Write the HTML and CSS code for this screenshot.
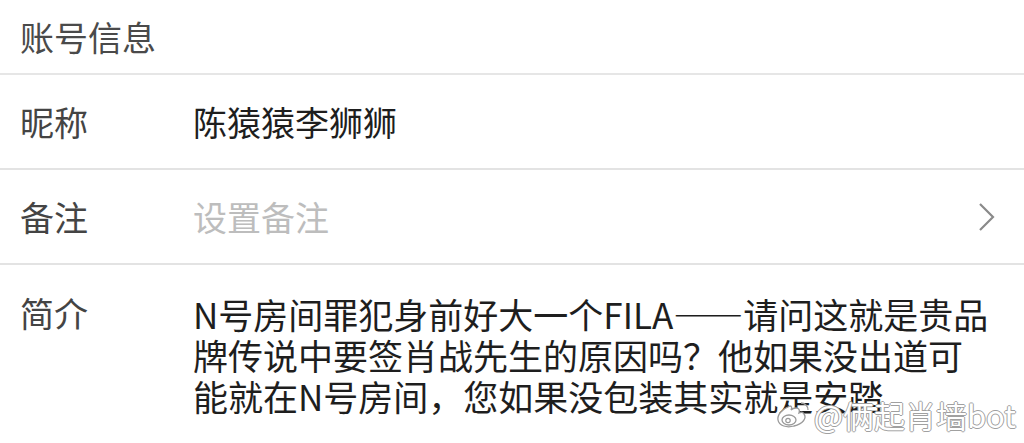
FILE: index.html
```html
<!DOCTYPE html>
<html lang="zh-CN">
<head>
    <meta charset="UTF-8">
    <meta name="viewport" content="width=device-width, initial-scale=1.0">
    <title>账号信息</title>
    <link rel="stylesheet" href="styles.css">
</head>
<body>
    <div class="page">
        <!-- Section title -->
        <div class="section-title">账号信息</div>

        <div class="row">
            <div class="label">昵称</div>
            <div class="value">陈猿猿李狮狮</div>
        </div>

        <div class="row">
            <div class="label">备注</div>
            <div class="value placeholder">设置备注</div>
            <svg class="chevron" width="18" height="30" viewBox="0 0 18 30">
                <polyline points="2,2 15,15 2,28" fill="none" stroke="#8a8a8a" stroke-width="2.2"/>
            </svg>
        </div>

        <div class="row bio">
            <div class="label">简介</div>
            <div class="value">N号房间罪犯身前好大一个FILA——请问这就是贵品<br>牌传说中要签肖战先生的原因吗？他如果没出道可<br>能就在N号房间，您如果没包装其实就是安踏</div>
        </div>

        <!-- Watermark -->
        <div class="watermark">
            <svg class="weibo" width="34" height="28" viewBox="0 0 34 28">
                <path d="M14 5 C6 8 1 14 2 19 C3 25 11 27 18 25 C27 23 31 17 28 13 C27 11 25 11 23 12 C24 9 23 7 20 7 C18 7 16 8 15 9 C16 7 16 5 14 5 Z" fill="#fff" stroke="#9a9a9a" stroke-width="1.3"/>
                <ellipse cx="13" cy="19" rx="7" ry="5" fill="none" stroke="#9a9a9a" stroke-width="1.3"/>
                <circle cx="12" cy="19.5" r="2.2" fill="none" stroke="#9a9a9a" stroke-width="1.2"/>
                <path d="M25 2 C29 2 32 5 32 9" fill="none" stroke="#9a9a9a" stroke-width="1.3"/>
            </svg>
            <span>@俩起肖墙bot</span>
        </div>
    </div>
</body>
</html>
```

FILE: styles.css
```css
* {
    margin: 0;
    padding: 0;
    box-sizing: border-box;
}

body {
    background: #fff;
    font-family: 'Noto Sans CJK SC', 'Noto Sans', sans-serif;
    color: #222;
    overflow: hidden;
}

.page {
    position: relative;
    width: 1024px;
    height: 443px;
}

.section-title {
    height: 75px;
    padding-left: 20px;
    display: flex;
    align-items: center;
    font-size: 34px;
    color: #4a4a4a;
    border-bottom: 2px solid #e6e6e6;
}

.row {
    height: 95px;
    display: flex;
    align-items: center;
    padding-left: 20px;
    padding-right: 28px;
    border-bottom: 2px solid #e3e3e3;
}

.label {
    width: 173px;
    flex-shrink: 0;
    font-size: 34px;
    color: #444;
}

.value {
    flex: 1;
    font-size: 34px;
    color: #1e1e1e;
}

.placeholder {
    color: #bdbdbd;
}

.chevron {
    display: block;
}

.bio {
    height: auto;
    align-items: flex-start;
    padding-top: 28px;
    border-bottom: none;
}

.bio .label {
    line-height: 40px;
}

.bio .value {
    font-size: 35px;
    line-height: 41px;
}

.watermark {
    position: absolute;
    right: 8px;
    bottom: 6px;
    display: flex;
    align-items: center;
    gap: 4px;
}

.watermark span {
    font-size: 31px;
    color: #fff;
    text-shadow: 1px 0 0 #a0a0a0, -1px 0 0 #a0a0a0, 0 1px 0 #a0a0a0, 0 -1px 0 #a0a0a0;
}
```
